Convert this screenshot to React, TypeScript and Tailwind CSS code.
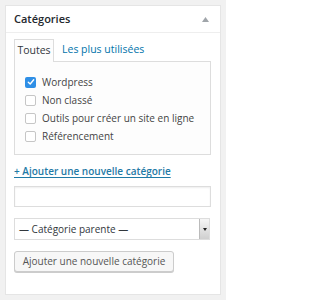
import React from "react";

const font = { fontFamily: '"Open Sans", "Noto Sans", sans-serif' };

function Box({ checked }: { checked?: boolean }) {
  if (checked) {
    return (
      <span className="flex h-[11px] w-[11px] items-center justify-center rounded-[2px] bg-[#2f8fe6]">
        <svg width="8" height="8" viewBox="0 0 8 8">
          <path d="M1.3 4.2 L3.2 6 L6.7 1.8" fill="none" stroke="#fff" strokeWidth="1.4" strokeLinecap="round" strokeLinejoin="round" />
        </svg>
      </span>
    );
  }
  return <span className="h-[11px] w-[11px] rounded-[2px] border border-[#c6c6c6] bg-white" />;
}

export default function App() {
  const items = [
    { label: "Wordpress", checked: true },
    { label: "Non classé" },
    { label: "Outils pour créer un site en ligne" },
    { label: "Référencement" },
  ];
  return (
    <div className="h-[300px] w-[226px] bg-[#f1f1f1] pt-[5px] pl-[5px] text-[#444]" style={font}>
      <div className="h-[290px] w-[216px] border border-[#e5e5e5] bg-white">
        <div className="flex h-[27px] items-center justify-between border-b border-[#eeeeee] pl-[8px] pr-[11px]">
          <span className="text-[11px] font-semibold text-[#23282d]">Catégories</span>
          <svg width="7" height="5" viewBox="0 0 7 5">
            <path d="M0 5 L3.5 0 L7 5 Z" fill="#a0a5aa" />
          </svg>
        </div>
        <div className="px-[8px] pt-[6px]">
          <div className="flex items-end text-[10px]">
            <div className="relative z-10 -mb-px flex h-[23px] w-[40px] items-center justify-center border border-b-0 border-[#dddddd] bg-[#fdfdfd] text-[10.5px] text-[#32373c]">
              Toutes
            </div>
            <div className="flex h-[22px] items-center pl-[8px] text-[10.5px] text-[#0073aa]">Les plus utilisées</div>
          </div>
          <div className="h-[94px] w-[197px] border border-[#dddddd] bg-[#fdfdfd] pt-[11px] pl-[10px]">
            {items.map((it) => (
              <div key={it.label} className="flex h-[18px] items-center gap-[6px] text-[10px] text-[#444]">
                <Box checked={it.checked} />
                <span>{it.label}</span>
              </div>
            ))}
          </div>
          <div className="mt-[9px] text-[10px] font-semibold text-[#1f7aa6] underline underline-offset-2">
            + Ajouter une nouvelle catégorie
          </div>
          <div className="mt-[7px] h-[21px] w-[197px] border border-[#dddddd] bg-white shadow-[inset_0_1px_2px_rgba(0,0,0,0.07)]" />
          <div className="mt-[11px] flex h-[22px] w-[196px] items-center border border-[#dddddd] bg-white">
            <span className="flex-1 pl-[4px] text-[10px] text-[#32373c]">— Catégorie parente —</span>
            <span className="flex h-[20px] w-[10px] items-center justify-center bg-gradient-to-b from-[#f6f6f6] to-[#cfcfcf] border-l border-[#bbbbbb]">
              <svg width="4" height="3" viewBox="0 0 4 3">
                <path d="M0 0 L4 0 L2 3 Z" fill="#222" />
              </svg>
            </span>
          </div>
          <div className="mt-[11px] flex h-[21px] w-[160px] items-center justify-center rounded-[3px] border border-[#cccccc] bg-[#f7f7f7] text-[10px] text-[#555] shadow-[0_1px_0_#ccc]">
            Ajouter une nouvelle catégorie
          </div>
        </div>
      </div>
    </div>
  );
}
